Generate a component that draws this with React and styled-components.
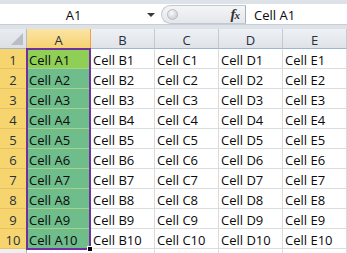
import React from "react";
import styled, { createGlobalStyle } from "styled-components";

const Global = createGlobalStyle`
  html, body { margin: 0; padding: 0; background: #fff; overflow: hidden; }
  * { box-sizing: border-box; }
`;

const Frame = styled.div`
  width: 347px;
  height: 253px;
  overflow: hidden;
  background: #fff;
  font-family: "Open Sans", "Noto Sans", sans-serif;
  font-size: 13px;
  color: #0a0a0a;
`;

const FormulaBar = styled.div`
  display: flex;
  height: 29px;
  background: #fff;
  border-top: 4px solid #dde2e8;
  border-bottom: 4px solid #dde2e8;
  box-shadow: inset 0 -1px 0 #c9ced6;
`;

const NameBox = styled.div`
  position: relative;
  width: 161px;
  display: flex;
  align-items: center;
  padding-right: 16px;
  padding-top: 1px;
  border-bottom: 1px solid #c9ced6;
`;

const NameText = styled.span`
  flex: 1;
  text-align: center;
  padding-left: 2px;
`;

const DropArrow = styled.span`
  position: absolute;
  right: 6px;
  top: 9px;
  width: 0;
  height: 0;
  border-left: 4px solid transparent;
  border-right: 4px solid transparent;
  border-top: 4px solid #3a3a3a;
`;

const FxPill = styled.div`
  width: 85px;
  margin: 1px 0 1px;
  display: flex;
  align-items: center;
  justify-content: space-between;
  padding: 0 6px 0 4px;
  background: linear-gradient(#f4f5f7, #e4e7eb);
  border: 1px solid #c3c8cf;
  border-right: 1px solid #a9afb7;
  border-radius: 10px 0 0 10px;
`;

const Knob = styled.span`
  width: 11px;
  height: 11px;
  border-radius: 50%;
  margin-left: 1px;
  background: radial-gradient(circle at 40% 35%, #fafafa, #c9cdd2 80%);
  border: 1px solid #b9bec5;
`;

const Fx = styled.span`
  font-family: "Liberation Serif", "DejaVu Serif", serif;
  font-style: italic;
  font-weight: bold;
  font-size: 15px;
  color: #333;
  letter-spacing: -1px;
  & small { font-size: 11px; }
`;

const FormulaInput = styled.div`
  flex: 1;
  display: flex;
  align-items: center;
  padding-left: 8px;
  padding-top: 1px;
  border-bottom: 1px solid #c9ced6;
`;

const GridWrap = styled.div`
  position: relative;
`;

const Grid = styled.div`
  display: grid;
  grid-template-columns: 27px repeat(5, 64px);
  grid-auto-rows: 20px;
`;

const Corner = styled.div`
  position: relative;
  background: linear-gradient(#e8ebef, #dde1e6);
  border-right: 1px solid #b6bcc5;
  border-bottom: 1px solid #9eb6ce;
  &::after {
    content: "";
    position: absolute;
    right: 3px;
    bottom: 3px;
    width: 0;
    height: 0;
    border-left: 12px solid transparent;
    border-bottom: 12px solid #b8bec6;
  }
`;

const ColHead = styled.div`
  display: flex;
  align-items: center;
  justify-content: center;
  padding-top: 2px;
  color: #27313d;
  background: ${(p) =>
    p.$active
      ? "linear-gradient(#fbe4a4, #f6d270)"
      : "linear-gradient(#eef1f4, #dfe3e8)"};
  border-right: 1px solid ${(p) => (p.$active ? "#f2a13c" : "#c5cad1")};
  border-bottom: 1px solid ${(p) => (p.$active ? "#f2a13c" : "#9eb6ce")};
  ${(p) => (p.$active ? "box-shadow: -1px 0 0 #f2a13c;" : "")}
`;

const RowHead = styled.div`
  display: flex;
  align-items: center;
  justify-content: center;
  padding-top: 2px;
  color: #27313d;
  background: ${(p) => (p.$active ? "#f7d56e" : "linear-gradient(#eef1f4, #e4e8ed)")};
  border-right: 1px solid ${(p) => (p.$active ? "#f2a13c" : "#9eb6ce")};
  border-bottom: 1px solid ${(p) => (p.$active ? "#e9c067" : "#c5cad1")};
`;

const Cell = styled.div`
  display: flex;
  align-items: center;
  padding: 2px 0 0 2px;
  white-space: nowrap;
  overflow: hidden;
  background: ${(p) => (p.$fill ? p.$fill : "#fff")};
  border-right: 1px solid #dadcdd;
  border-bottom: 1px solid ${(p) => (p.$fill ? "#a9d18e" : "#dadcdd")};
`;

const Selection = styled.div`
  position: absolute;
  left: 26px;
  top: 19px;
  width: 65px;
  height: 202px;
  border: 2px solid #7030a0;
  pointer-events: none;
`;

const FillHandle = styled.span`
  position: absolute;
  right: -4px;
  bottom: -4px;
  width: 6px;
  height: 6px;
  background: #000;
  border: 1px solid #fff;
`;

const cols = ["A", "B", "C", "D", "E"];
const rows = Array.from({ length: 11 }, (_, i) => i + 1);

export default function App() {
  return (
    <Frame>
      <Global />
      <FormulaBar>
        <NameBox>
          <NameText>A1</NameText>
          <DropArrow />
        </NameBox>
        <FxPill>
          <Knob />
          <Fx>f<small>x</small></Fx>
        </FxPill>
        <FormulaInput>Cell A1</FormulaInput>
      </FormulaBar>
      <GridWrap>
        <Grid>
          <Corner />
          {cols.map((c) => (
            <ColHead key={c} $active={c === "A"}>{c}</ColHead>
          ))}
          {rows.map((r) => (
            <React.Fragment key={r}>
              <RowHead $active={r <= 10}>{r <= 10 ? r : ""}</RowHead>
              {cols.map((c) => {
                const isA = c === "A" && r <= 10;
                const fill = isA ? (r === 1 ? "#8fcf55" : "#6fbd8a") : null;
                return (
                  <Cell key={c} $fill={fill}>
                    {r <= 10 ? `Cell ${c}${r}` : ""}
                  </Cell>
                );
              })}
            </React.Fragment>
          ))}
        </Grid>
        <Selection>
          <FillHandle />
        </Selection>
      </GridWrap>
    </Frame>
  );
}
